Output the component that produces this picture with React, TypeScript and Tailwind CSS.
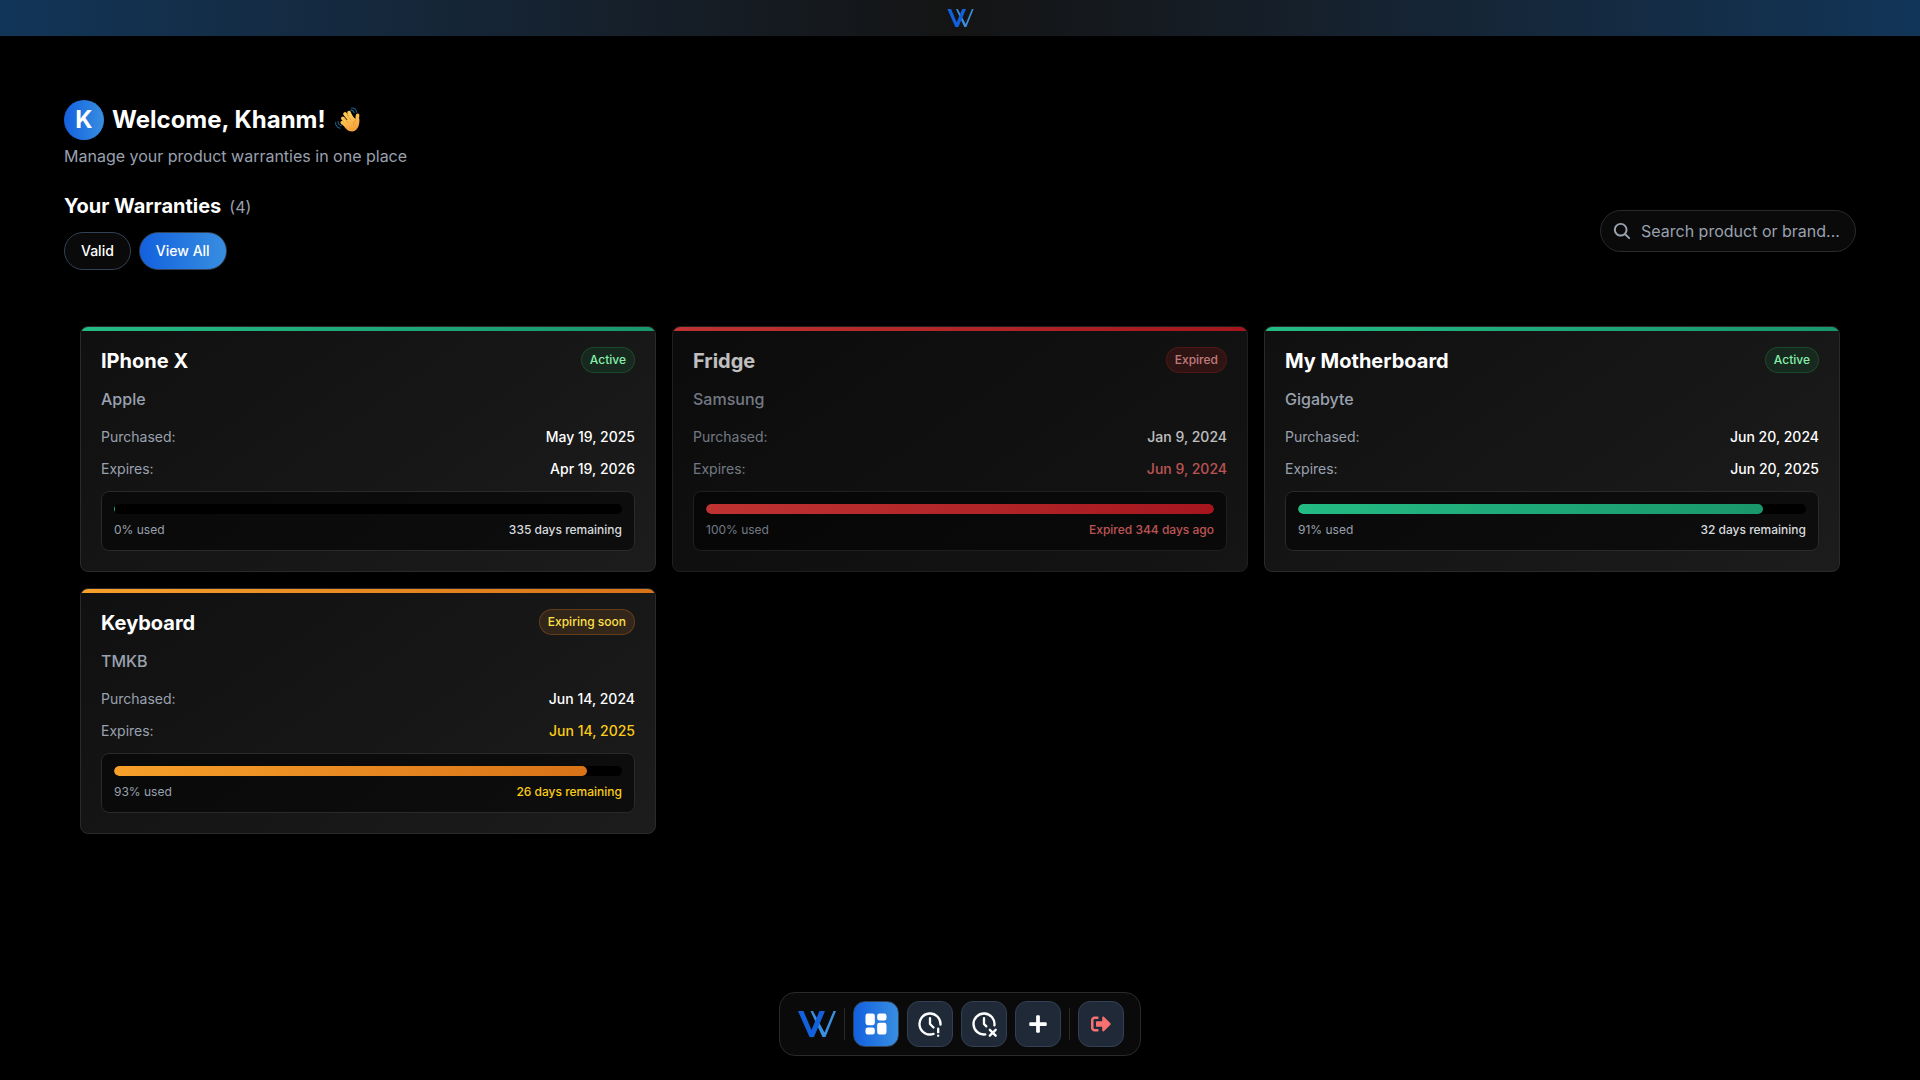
import React from "react";
import { FaPlus, FaSignOutAlt } from "react-icons/fa";
import { IoSearch } from "react-icons/io5";
import { TbClockExclamation, TbClockX, TbLayoutDashboardFilled } from "react-icons/tb";

type Tone = "active" | "expired" | "soon";

interface Warranty {
  name: string;
  brand: string;
  purchased: string;
  expires: string;
  used: number;
  width: number;
  remaining: string;
  tone: Tone;
}

const warranties: Warranty[] = [
  { name: "IPhone X", brand: "Apple", purchased: "May 19, 2025", expires: "Apr 19, 2026", used: 0, width: 0.2, remaining: "335 days remaining", tone: "active" },
  { name: "Fridge", brand: "Samsung", purchased: "Jan 9, 2024", expires: "Jun 9, 2024", used: 100, width: 100, remaining: "Expired 344 days ago", tone: "expired" },
  { name: "My Motherboard", brand: "Gigabyte", purchased: "Jun 20, 2024", expires: "Jun 20, 2025", used: 91, width: 91.5, remaining: "32 days remaining", tone: "active" },
  { name: "Keyboard", brand: "TMKB", purchased: "Jun 14, 2024", expires: "Jun 14, 2025", used: 93, width: 93.1, remaining: "26 days remaining", tone: "soon" },
];

const tones: Record<Tone, { label: string; bar: string; badge: string; date: string; note: string; card: string }> = {
  active: {
    label: "Active",
    bar: "bg-linear-135 from-[#24bb85] to-[#19976b]",
    badge: "bg-[#22c55e]/10 border-[#22c55e]/20 text-[#86efac]",
    date: "text-white",
    note: "text-[#d8dade]",
    card: "",
  },
  expired: {
    label: "Expired",
    bar: "bg-linear-135 from-[#ff4444] to-[#dc1c28]",
    badge: "bg-[#dc2626]/20 border-[#dc2626]/30 text-[#fca5a5]",
    date: "text-[#f87171]",
    note: "text-[#f87171]",
    card: "opacity-75",
  },
  soon: {
    label: "Expiring soon",
    bar: "bg-linear-135 from-[#f7a02a] to-[#d87318]",
    badge: "bg-[#f58a32]/12 border-[#f58a22]/25 text-[#fde047]",
    date: "text-[#facc15]",
    note: "text-[#facc15]",
    card: "",
  },
};

function Logo({ className }: { className: string }) {
  return (
    <svg viewBox="0 0 38 26" className={className} aria-hidden="true">
      <path d="M12.5 0H15L26.500 21.500L35.500 0H38L27.500 26H24.500Z" fill="#3b8fe0" />
      <path d="M0 0H5.500L13.500 19L21.500 0H27L16 26H11.500Z" fill="#1260dc" />
    </svg>
  );
}

function WavingHand() {
  return (
    <svg viewBox="0 0 28 28" className="size-7" role="img" aria-label="Waving hand">
      <defs>
        <linearGradient id="skin" x1="0" y1="0" x2="0.4" y2="1">
          <stop offset="0" stopColor="#ffd05c" />
          <stop offset="1" stopColor="#f5a03a" />
        </linearGradient>
      </defs>
      <g fill="none" stroke="#1f5f8b" strokeWidth="1.1" strokeLinecap="round">
        <path d="M16.500 4.200q2.800-.4 3.600 2.600M17.500 2q4.400-.3 5.200 4.200" />
        <path d="M4 15.500q.2 3.400 3.400 4.200M1.500 16.500q.3 4.700 4.500 5.700" />
      </g>
      <g strokeWidth="3.6" strokeLinecap="round">
        <path d="M13 17L8.800 12.300" stroke="#ffc553" />
        <path d="M16 14L11 7.800" stroke="#ffc953" />
        <path d="M18 13L15 6.600" stroke="#ffcb55" />
        <path d="M13 20L8.200 16.600" stroke="#fdba4b" />
        <path d="M22.800 16L23.600 9.200" stroke="#fdbb4c" />
      </g>
      <path d="M9 18L18 9.500L21.800 13.500L25.300 12.500C26 18 24 25 18.500 25.500C14 25.800 11 22.500 9 18Z" fill="url(#skin)" />
      <path d="M10.500 12.800L14 16.500M13.200 9.200L17 14M19.500 18.500Q19.500 15 22 14" fill="none" stroke="#df8a2c" strokeWidth="0.7" strokeLinecap="round" />
    </svg>
  );
}

function WarrantyCard({ item }: { item: Warranty }) {
  const tone = tones[item.tone];
  return (
    <article className={`overflow-hidden rounded-lg border border-[#2a2a2a] bg-linear-145 from-[#101010] to-[#1c1c1c] ${tone.card}`}>
      <div className={`h-1 ${tone.bar}`} />
      <div className="px-5 pt-4 pb-5">
        <div className="mb-3 flex items-start justify-between">
          <h3 className="text-xl font-bold text-white">{item.name}</h3>
          <span className={`rounded-full border px-2 py-1 text-xs font-medium ${tone.badge}`}>{tone.label}</span>
        </div>
        <p className="mb-4 text-base font-medium text-gray-400">{item.brand}</p>
        <dl className="mb-3 flex flex-col gap-3 text-sm">
          <div className="flex justify-between">
            <dt className="text-gray-400">Purchased:</dt>
            <dd className="font-medium text-white">{item.purchased}</dd>
          </div>
          <div className="flex justify-between">
            <dt className="text-gray-400">Expires:</dt>
            <dd className={`font-medium ${tone.date}`}>{item.expires}</dd>
          </div>
        </dl>
        <div className="rounded-lg border border-[#2a2a2a] bg-black/50 p-3">
          <div className="mb-2 h-2.5 overflow-hidden rounded-full bg-black">
            <div className={`h-full rounded-full ${tone.bar}`} style={{ width: `${item.width}%` }} />
          </div>
          <div className="flex justify-between text-xs">
            <span className="text-gray-400">{item.used}% used</span>
            <span className={`font-medium ${tone.note}`}>{item.remaining}</span>
          </div>
        </div>
      </div>
    </article>
  );
}

const dockButton = "flex size-[46px] items-center justify-center rounded-xl border border-[#334155] bg-[#1f2937] text-white";

export default function App() {
  return (
    <div className="flex min-h-screen flex-col bg-black font-[Inter,sans-serif] text-white">
      <header className="flex h-9 items-center justify-center bg-linear-to-r from-[#113558] via-[#141414] to-[#113558]">
        <Logo className="h-[18px] w-[27px]" />
      </header>

      <main className="flex-1 px-16 pt-16">
        <div className="flex items-center gap-2">
          <div className="flex size-10 items-center justify-center rounded-full bg-linear-to-r from-[#1460de] to-[#388ee0] text-2xl font-bold">K</div>
          <h1 className="flex items-center gap-2 text-2xl font-bold">
            Welcome, Khanm! <WavingHand />
          </h1>
        </div>
        <p className="mt-1 mb-6 text-base text-gray-400">Manage your product warranties in one place</p>

        <div className="mb-10 flex items-center justify-between">
          <div>
            <h2 className="mb-3 flex items-baseline gap-2 text-xl font-bold">
              Your Warranties <span className="text-base font-normal text-gray-400">(4)</span>
            </h2>
            <div className="flex gap-2">
              <button className="rounded-full border border-[#334155] bg-[#0a0a0a] px-4 py-2 text-sm font-medium">Valid</button>
              <button className="rounded-full border border-[#334155] bg-linear-to-r from-[#1460de] to-[#388ee0] px-4 py-2 text-sm font-medium">View All</button>
            </div>
          </div>
          <label className="relative block">
            <IoSearch className="absolute top-1/2 left-3 size-5 -translate-y-1/2 text-gray-400" aria-hidden="true" />
            <input
              type="text"
              aria-label="Search product or brand"
              placeholder="Search product or brand..."
              className="w-64 rounded-full border border-[#2a2a2a] bg-[#0a0a0a] py-2 pr-4 pl-10 text-base text-white placeholder:text-gray-400"
            />
          </label>
        </div>

        <div className="grid grid-cols-3 gap-4 p-4">
          {warranties.map((item) => (
            <WarrantyCard key={item.name} item={item} />
          ))}
        </div>
      </main>

      <footer className="mb-6 flex justify-center">
        <nav className="flex items-center gap-2 rounded-2xl border border-[#2a2a2a] bg-[#0a0a0a] px-4 py-2">
          <a href="#home" aria-label="Home" className="flex w-10 justify-end">
            <Logo className="h-[26px] w-[38px]" />
          </a>
          <div className="h-8 w-px bg-[#2a2a2a]" />
          <button aria-label="Dashboard" className="flex size-[46px] items-center justify-center rounded-xl border border-[#334155] bg-linear-to-r from-[#1460de] to-[#388ee0]">
            <TbLayoutDashboardFilled className="size-7" />
          </button>
          <button aria-label="Expiring soon" className={dockButton}>
            <TbClockExclamation className="size-7" />
          </button>
          <button aria-label="Expired" className={dockButton}>
            <TbClockX className="size-7" />
          </button>
          <button aria-label="Add warranty" className={dockButton}>
            <FaPlus className="size-5" />
          </button>
          <div className="h-8 w-px bg-[#2a2a2a]" />
          <button aria-label="Log out" className={dockButton}>
            <FaSignOutAlt className="size-5 text-[#f87171]" />
          </button>
        </nav>
      </footer>
    </div>
  );
}
